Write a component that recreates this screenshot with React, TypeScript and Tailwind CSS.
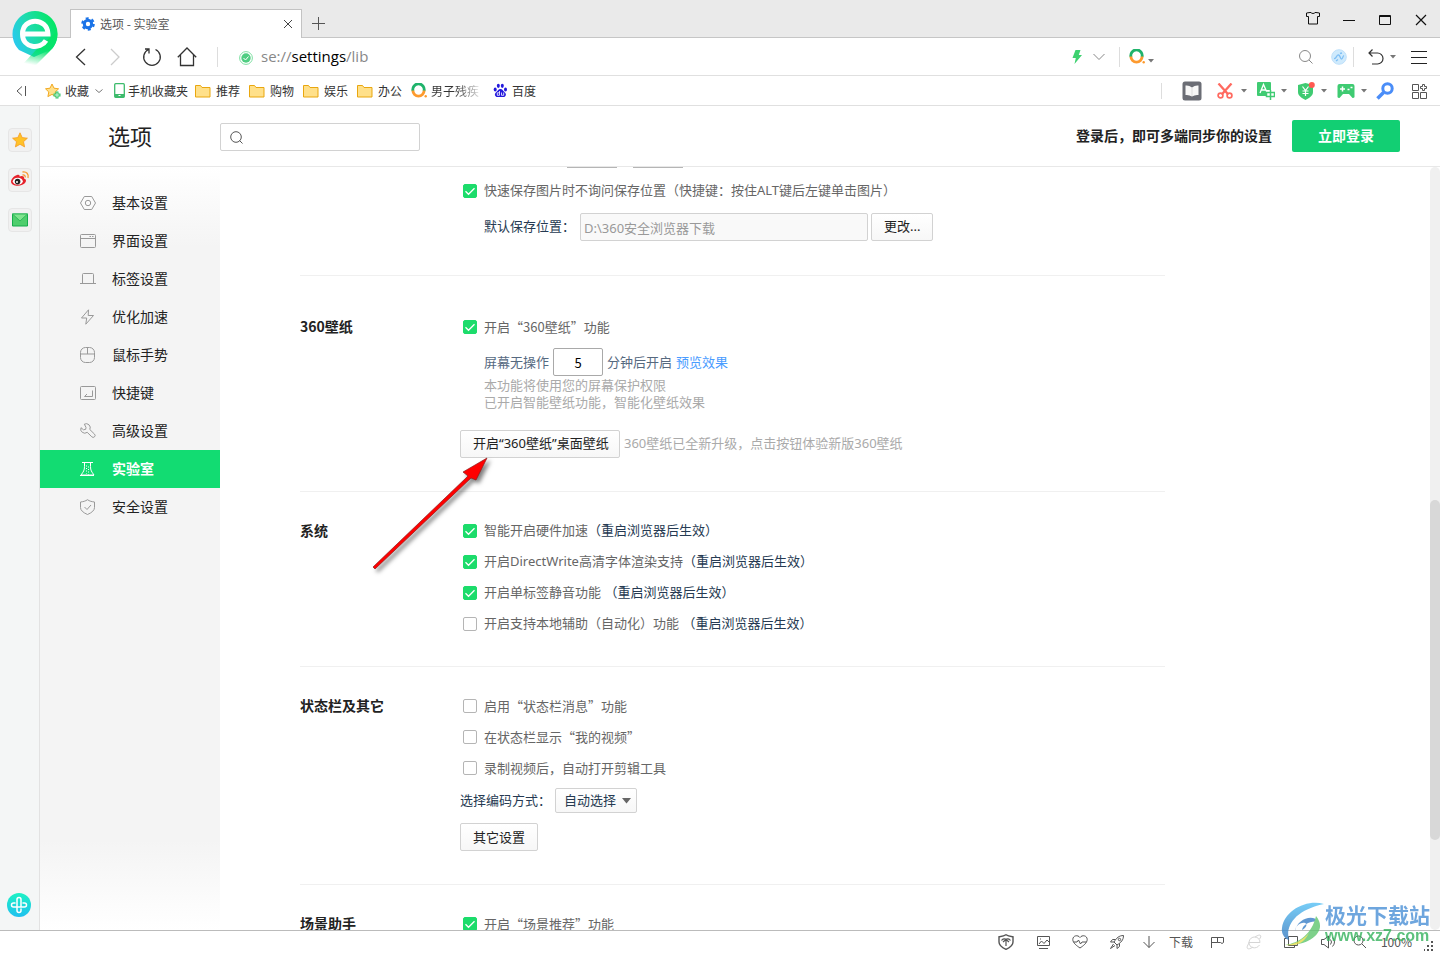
import React, { useState } from "react";

interface IconProps {
  children: React.ReactNode;
  size?: number;
  className?: string;
}

const Icon: React.FC<IconProps> = ({ children, size = 16, className = "" }) => (
  <svg
    width={size}
    height={size}
    viewBox={`0 0 ${size} ${size}`}
    fill="none"
    stroke="currentColor"
    className={`shrink-0 ${className}`}
    aria-hidden="true"
  >
    {children}
  </svg>
);

const Caret: React.FC = () => (
  <svg width="6" height="4" viewBox="0 0 6 4" className="shrink-0 text-[#777]" aria-hidden="true">
    <path d="M0 0h6L3 3.5z" fill="currentColor" />
  </svg>
);

const RingLogo: React.FC = () => (
  <Icon size={16}>
    <path d="M2 8a5.7 5.7 0 1 1 11 0" stroke="#1fb36b" strokeWidth="2.8" />
    <path d="M1.9 7.5a5.6 5.6 0 0 0 11.2 0" stroke="#fd9a2e" strokeWidth="2.8" />
    <circle cx="14.7" cy="13.3" r="1.2" fill="#fd9a2e" stroke="none" />
  </Icon>
);

const Folder: React.FC = () => (
  <Icon size={16}>
    <path d="M.5 2.5h5l1.5 2h8v9.500H.5z" fill="#ffe08a" stroke="#e9a70f" />
  </Icon>
);

interface NavItem {
  id: string;
  label: string;
  icon: React.ReactNode;
}

const navItems: NavItem[] = [
  {
    id: "basic",
    label: "基本设置",
    icon: (
      <>
        <path d="M4.3 1.5h7.4L15.5 8l-3.8 6.5H4.3L.5 8z" />
        <circle cx="8" cy="8" r="2.7" />
      </>
    ),
  },
  {
    id: "ui",
    label: "界面设置",
    icon: (
      <>
        <rect x=".5" y="1.5" width="15" height="13" rx="1" />
        <path d="M.5 5.5h15M9.5 3.5h1.5M12 3.5h1.5" />
      </>
    ),
  },
  { id: "tabs", label: "标签设置", icon: <path d="M2.5 12.5v-9q0-1 1-1h9q1 0 1 1v9M0 12.5h16" /> },
  { id: "speed", label: "优化加速", icon: <path d="M8.5.8 1.5 9h5.2l-.9 6.2L13.500 6.500H8.200z" /> },
  {
    id: "mouse",
    label: "鼠标手势",
    icon: (
      <>
        <rect x=".5" y=".5" width="14" height="15" rx="5" />
        <path d="M.5 7h14M7.5.5V7" />
      </>
    ),
  },
  {
    id: "keys",
    label: "快捷键",
    icon: (
      <>
        <rect x=".5" y="1.5" width="15" height="13" rx="1" />
        <path d="M12.5 5.5v6h-8M7 9l-2.5 2.5" />
      </>
    ),
  },
  {
    id: "advanced",
    label: "高级设置",
    icon: (
      <path d="M4.3 1.200a4 4 0 0 1 5.500 5.300l4.700 4.600a1.800 1.800 0 0 1-2.700 2.700L7.200 9.300A4 4 0 0 1 1 4.700l2.500 2.100 2.200-.5.300-2z" />
    ),
  },
  {
    id: "lab",
    label: "实验室",
    icon: (
      <>
        <path d="M2 1.500h11M4.500 2v3.500c0 4-1 5-3.500 8.500h13c-2.500-3.500-3.500-4.500-3.500-8.500V2" />
        <path d="M6.500 4.500v8M8.500 5.500v8" strokeDasharray="1 1.500" />
        <path d="M0 14.500h14" />
      </>
    ),
  },
  {
    id: "safe",
    label: "安全设置",
    icon: (
      <>
        <path d="M7.500.7c2 1.500 4.500 2 7 2.300v5.500q0 4-7 7-7-3-7-7V3c2.500-.3 5-.8 7-2.300z" />
        <path d="M4.500 8 7 10.500 11 6" />
      </>
    ),
  },
];

interface CheckProps {
  id: string;
  label: string;
  note?: string;
  checked?: boolean;
}

const Check: React.FC<CheckProps> = ({ id, label, note, checked }) => (
  <div className="flex h-[31px] items-center gap-[7px] pl-[3px]">
    <span className="grid size-3.5 shrink-0">
      <input
        id={id}
        type="checkbox"
        defaultChecked={checked}
        className="peer col-start-1 row-start-1 size-3.5 appearance-none rounded-xs border border-[#b5b5b5] bg-white checked:border-[#1cdc6b] checked:bg-[#1cdc6b]"
      />
      <svg viewBox="0 0 14 14" className="pointer-events-none invisible col-start-1 row-start-1 size-3.5 peer-checked:visible">
        <path d="M2.5 7.3 5.5 10.3 11.5 4.2" fill="none" stroke="#fff" strokeWidth="1.3" />
      </svg>
    </span>
    <label htmlFor={id} className="text-[#666]">
      {label}
      {note && <span className="text-[#263a52]">{note}</span>}
    </label>
  </div>
);

interface SectionProps {
  title?: string;
  className: string;
  children: React.ReactNode;
}

const Section: React.FC<SectionProps> = ({ title, className, children }) => (
  <section className={`flex border-b border-[#f0f0f0] ${className}`}>
    <h2 className="w-40 shrink-0 text-sm leading-[31px] font-bold text-[#222]">{title}</h2>
    <div className="min-w-0 flex-1">{children}</div>
  </section>
);

const plainButton =
  "rounded-xs border border-[#d2d2d2] bg-linear-to-b from-white to-[#f7f7f7] px-3 text-[#222] whitespace-nowrap";

const TitleBar: React.FC = () => (
  <header className="flex h-[38px] shrink-0 items-end border-b border-[#c6c6c6] bg-[#eaeaea] pl-[70px]">
    <div className="-mb-px flex h-[29px] w-[232px] items-center border border-b-0 border-[#c3c3c3] bg-white px-2.5">
      <Icon size={14} className="text-[#1a73e8]">
        <circle cx="7" cy="7" r="3.7" strokeWidth="3" />
        <circle cx="7" cy="7" r="5.8" strokeWidth="2" strokeDasharray="3 3.07" />
      </Icon>
      <span className="ml-[5px] flex-1 text-xs text-[#555]">选项 - 实验室</span>
      <button type="button" aria-label="关闭标签" className="-mr-0.5">
        <Icon size={10} className="text-[#444]">
          <path d="m1 1 8 8M9 1 1 9" />
        </Icon>
      </button>
    </div>
    <button type="button" aria-label="新建标签" className="mb-1.5 ml-2.5">
      <Icon size={14} className="text-[#555]">
        <path d="M6.5 0v13M0 6.5h13" />
      </Icon>
    </button>
    <div className="mb-2.5 ml-auto flex items-center gap-5 pr-[11px] text-[#111]">
      <button type="button" aria-label="皮肤">
        <Icon>
          <path d="M5 1.5h1c.5 1.3 3.5 1.3 4 0h1l3.500.5v3.500h-2v7.500h-9V5.500h-2V2z" />
        </Icon>
      </button>
      <button type="button" aria-label="最小化">
        <Icon>
          <path d="M2 9.5h12" />
        </Icon>
      </button>
      <button type="button" aria-label="最大化">
        <Icon>
          <path d="M2.5 4.500h11v9h-11zM2 5.500h12" />
        </Icon>
      </button>
      <button type="button" aria-label="关闭">
        <Icon>
          <path d="m3 4 10 10M13 4 3 14" strokeWidth="1.200" />
        </Icon>
      </button>
    </div>
  </header>
);

const AddressBar: React.FC = () => (
  <div className="flex h-[38px] shrink-0 items-center border-b border-[#e0e0e0] pl-[72px] pr-[13px] text-[#333]">
    <div className="flex items-center gap-[15px]">
      <button type="button" aria-label="后退">
        <Icon size={20}>
          <path d="M13 2 4.5 10l8.5 8" strokeWidth="1.3" />
        </Icon>
      </button>
      <button type="button" aria-label="前进" className="text-[#ccc]">
        <Icon size={20}>
          <path d="m4 2 8 8-8 8" strokeWidth="1.3" />
        </Icon>
      </button>
      <button type="button" aria-label="刷新">
        <Icon size={20}>
          <path d="M13.5 2.5a8.3 8.3 0 1 1-7 0M3 2h4v4.5" strokeWidth="1.3" />
        </Icon>
      </button>
      <button type="button" aria-label="主页">
        <Icon size={20}>
          <path d="M.8 10.2 10 1l9.200 9.200M3.500 8v10.500h13V8" strokeWidth="1.300" />
        </Icon>
      </button>
    </div>
    <span className="ml-5 h-5 w-px bg-[#ddd]" />
    <Icon size={14} className="mt-0.5 ml-[21px]">
      <circle cx="7" cy="7" r="6.4" stroke="#7fe0a3" />
      <circle cx="7" cy="7" r="4.7" fill="#4fce82" stroke="none" />
      <path d="m4.5 7 2 2 3-3.5" stroke="#fff" />
    </Icon>
    <p className="ml-2 flex-1 font-['Open_Sans','Noto_Sans',sans-serif] text-[15px] text-[#888]">
      se://<span className="text-black">settings</span>/lib
    </p>
    <Icon className="text-[#3dd16f]">
      <path d="M6.5 1h5L9.800 6H13L5.500 15l1.300-6H3.500z" fill="currentColor" stroke="none" />
    </Icon>
    <Icon size={14} className="ml-[7px] text-[#888]">
      <path d="m1.500 4 5.500 5.500L12.500 4" />
    </Icon>
    <span className="ml-[13px] h-5 w-px bg-[#ddd]" />
    <div className="ml-[9px] flex w-44 items-center gap-[3px]">
      <RingLogo />
      <span className="pt-2">
        <Caret />
      </span>
      <input aria-label="搜索网页" className="min-w-0 flex-1 outline-none" />
    </div>
    <Icon size={14} className="-ml-[6px] text-[#888]">
      <circle cx="6" cy="6" r="5.5" />
      <path d="m10 10 3.5 3.5" />
    </Icon>
    <Icon className="ml-[18px]">
      <circle cx="8" cy="8" r="7.3" fill="#cfeafc" stroke="#bfe0fa" />
      <path d="M3 9.500c2.500.5 2.500-4 4.500-3.500s1.500 4 3 4 1-3 2.500-3.500M5 12l2-1.500M9 4.500l2-.5" stroke="#7fbff5" strokeWidth="1.300" />
    </Icon>
    <span className="ml-[6px] h-5 w-px bg-[#ddd]" />
    <button type="button" aria-label="恢复" className="ml-[14px]">
      <Icon>
        <path d="M4.5.5 1 4l3.500 3.500M1 4h8.500a5.500 5.500 0 0 1 0 11H4" strokeWidth="1.200" />
      </Icon>
    </button>
    <span className="ml-[6px]">
      <Caret />
    </span>
    <button type="button" aria-label="菜单" className="ml-[15px] text-[#222]">
      <Icon>
        <path d="M0 2.5h16M0 8.5h16M0 14.5h16" />
      </Icon>
    </button>
  </div>
);

const BookmarkBar: React.FC = () => (
  <div className="flex h-[30px] shrink-0 items-center border-b border-[#e0e0e0] pl-4 pr-3 text-xs text-[#333]">
    <Icon size={10} className="text-[#555]">
      <path d="M6 .5 1 5l5 4.5M9.5 0v10" />
    </Icon>
    <a href="#fav" className="ml-[19px] flex items-center gap-1">
      <Icon>
        <path d="m7 1 2 4.200 4.600.6-3.400 3.200.9 4.600L7 11.400 2.900 13.600l.9-4.600L.5 5.800l4.500-.6z" fill="#ffe08a" stroke="#f2a922" />
        <path d="M12 8.500v7M8.500 12h7" stroke="#35c46a" strokeWidth="3" />
        <path d="M12 9.500v5M9.500 12h5" stroke="#c8f5d8" />
      </Icon>
      收藏
    </a>
    <Icon size={8} className="ml-1.5 text-[#777]">
      <path d="m.5 2.500 3.500 3 3.500-3" />
    </Icon>
    <a href="#mobile" className="ml-[11px] flex items-center gap-[3px]">
      <svg width="11" height="15" viewBox="0 0 11 15" className="shrink-0" aria-hidden="true">
        <rect x=".7" y=".7" width="9.6" height="13.6" rx="1" fill="#fff" stroke="#3dbb6c" strokeWidth="1.3" />
        <path d="M.7 11h9.600v3.300H.7z" fill="#3dbb6c" />
        <path d="M4.5 12.5h2" stroke="#fff" />
      </svg>
      手机收藏夹
    </a>
    <nav className="ml-[7px] flex gap-[9px]">
      {["推荐", "购物", "娱乐", "办公"].map((name) => (
        <a key={name} href="#folder" className="flex items-center gap-[5px]">
          <Folder />
          {name}
        </a>
      ))}
    </nav>
    <a href="#news" className="ml-[9px] flex items-center gap-1">
      <RingLogo />
      <span className="bg-linear-to-r from-[#333] from-50% to-[#ddd] bg-clip-text text-transparent">男子残疾</span>
    </a>
    <a href="#baidu" className="ml-[14px] flex items-center gap-1">
      <Icon size={15} className="text-[#2319dc]">
        <g fill="currentColor" stroke="none">
          <ellipse cx="2.200" cy="6.500" rx="1.500" ry="2" />
          <ellipse cx="5.300" cy="2.800" rx="1.500" ry="2.100" />
          <ellipse cx="9.300" cy="2.800" rx="1.500" ry="2.100" />
          <ellipse cx="12.500" cy="6.500" rx="1.500" ry="2" />
          <path d="M7.400 6c2 0 2.500 1.700 4 3s2 2.500 1 4-3 1-5 1-4 .5-5-1-.5-2.700 1-4S5.400 6 7.400 6z" />
        </g>
        <path d="M6.500 8v4.300H4.300v-2.500h2.200M8.500 9.500v2.800h2.200V9.500" stroke="#fff" strokeWidth=".8" />
      </Icon>
      百度
    </a>
    <div className="ml-auto flex items-center">
      <span className="mr-5 h-4 w-px bg-[#ddd]" />
      <Icon size={20}>
        <rect x=".5" y=".5" width="19" height="19" rx="2.5" fill="#6b6d75" stroke="none" />
        <path d="M3.500 4.500q3.500-.5 6.500 2 3-2.500 6.500-2V14q-3.500-.5-6.500 1.500-3-2-6.500-1.500z" fill="#f7f7f7" stroke="none" />
        <path d="M10 7v8" stroke="#ddd" />
      </Icon>
      <Icon className="mr-2 ml-[15px] text-[#ff6a60]">
        <path d="m1.500.5 9.800 11M14.500.5l-9.800 11" strokeWidth="2.300" />
        <circle cx="3.500" cy="12.500" r="2.400" strokeWidth="1.700" />
        <circle cx="12.500" cy="12.500" r="2.400" strokeWidth="1.700" />
      </Icon>
      <Caret />
      <Icon size={18} className="mr-1.5 ml-[10px] text-[#3fcb72]">
        <path d="M1 0h12q1 0 1 1v7H9v6H1q-1 0-1-1V1q0-1 1-1z" fill="currentColor" stroke="none" />
        <path d="m3 11 3.500-8.500L9.800 10M4.500 8h4" stroke="#fff" strokeWidth="1.300" />
        <path d="M13.500 8v10M9.500 10.500h8v4h-8z" strokeWidth="1.500" />
      </Icon>
      <Caret />
      <Icon size={18} className="mr-1.5 ml-[10px] text-[#3fcb72]">
        <path d="M8.500 1 16 3v7c0 4-4 6-7.500 8C5 16 1 14 1 10V3z" fill="currentColor" stroke="none" />
        <path d="m5.500 4.500 3 4 3-4M8.500 8.500V14M5.500 9h6M5.500 11.500h6" stroke="#fff" strokeWidth="1.200" />
        <circle cx="14.800" cy="3" r="3" fill="#ff5a52" stroke="none" />
      </Icon>
      <Caret />
      <Icon size={18} className="mr-1.5 ml-[10px] text-[#3fcb72]">
        <path d="M2.500 2h13q2 0 2 2v11q0 1-2 1l-3.500-4H6l-3.500 4q-2 0-2-1V4q0-2 2-2z" fill="currentColor" stroke="none" />
        <path d="M5.500 4.500v5M3 7h5M10.500 7.500h2M13.500 5.500h2" stroke="#fff" strokeWidth="1.500" />
      </Icon>
      <Caret />
      <Icon size={18} className="ml-[9px] text-[#4a8df8]">
        <circle cx="11.500" cy="6.500" r="4.700" strokeWidth="3" />
        <path d="m7.500 10.500-6 6" strokeWidth="3.500" />
      </Icon>
      <Icon className="ml-[18px] text-[#555]">
        <path d="M.5 1.500h6v6h-6zM.5 9.500h6v6h-6zM8.500 9.500h6v6h-6zM10.500 3.500v-2h2v2h2v2h-2v2h-2v-2h-2v-2z" />
      </Icon>
    </div>
  </div>
);

const SideRail: React.FC = () => (
  <aside className="flex w-10 shrink-0 flex-col items-center gap-4 border-r border-[#e2e2e2] bg-[#f4f6f6] pt-[22px] pb-[13px]">
    <button type="button" aria-label="收藏" className="grid size-6 place-items-center rounded-sm border border-[#e6e6e6] bg-[#f1f1f1]">
      <Icon>
        <path d="m8 .8 2.200 4.800 5.200.6-3.900 3.500 1.100 5.200L8 12.300l-4.600 2.600 1.100-5.200L.6 6.200l5.200-.6z" fill="#ffc228" stroke="#f59a23" strokeWidth=".8" />
      </Icon>
    </button>
    <button type="button" aria-label="微博" className="grid size-6 place-items-center rounded-sm border border-[#e6e6e6] bg-[#f1f1f1]">
      <Icon size={20}>
        <path d="M7 5c2-.9 3 .2 2.500 1.600C12 5.500 14.500 6 14 8.500c2 .6 2.500 2 1.500 3.700-2.500 4.600-14 4.800-14.500-.5C1 9 4 6 7 5z" fill="#e6222b" stroke="none" />
        <ellipse cx="7.800" cy="11.300" rx="5" ry="3.500" fill="#fff" stroke="none" />
        <circle cx="7.600" cy="11.600" r="2.800" fill="#222" stroke="none" />
        <circle cx="7" cy="12" r="1" fill="#fff" stroke="none" />
        <path d="M12.500 5c2-.4 3 .8 2.700 2.500M12.500 2c4-.8 6.500 2 5.500 6" stroke="#f79a33" strokeWidth="1.300" />
      </Icon>
    </button>
    <button type="button" aria-label="邮箱" className="grid size-6 place-items-center rounded-sm border border-[#e6e6e6] bg-[#f1f1f1]">
      <Icon>
        <path d="M.5 2h15v12H.5z" fill="#4fce6d" stroke="#16ad4d" />
        <path d="M.5 2h15L8 9z" fill="#7fe48e" stroke="#2fb858" />
      </Icon>
    </button>
    <button type="button" aria-label="添加" className="mt-auto -ml-px">
      <Icon size={24}>
        <defs>
          <linearGradient id="add" x2="0" y2="1">
            <stop stopColor="#1df2c4" />
            <stop offset="1" stopColor="#1fc0f0" />
          </linearGradient>
        </defs>
        <circle cx="12" cy="12" r="12" fill="url(#add)" stroke="none" />
        <path
          d="M10 14V6.500a2 2 0 0 1 4 0V14M10 14v3.500a2 2 0 0 0 4 0V16M14 14H6.500a2 2 0 0 1 0-4H8M14 14h3.500a2 2 0 0 0 0-4H16"
          stroke="#fff"
          strokeWidth="1.500"
          strokeLinecap="round"
        />
      </Icon>
    </button>
  </aside>
);

const SettingsHeader: React.FC = () => (
  <div className="flex h-[61px] shrink-0 items-center border-b border-[#e8e8e8] pr-10">
    <h1 className="w-[180px] pb-0.5 pl-[68px] text-[22px] text-[#222]">选项</h1>
    <div className="mt-0.5 flex h-7 w-[200px] items-center gap-2 rounded-xs border border-[#d2d2d2] px-[9px]">
      <Icon size={13} className="text-[#555]">
        <circle cx="6" cy="6" r="5.3" />
        <path d="m9.5 9.5 3 3" />
      </Icon>
      <input type="search" aria-label="搜索设置" className="min-w-0 flex-1 text-[13px] outline-none" />
    </div>
    <p className="mr-5 ml-auto pb-0.5 text-sm font-bold text-[#222]">登录后，即可多端同步你的设置</p>
    <button type="button" className="h-8 w-[108px] rounded-xs bg-[#12cf73] pb-0.5 text-sm font-bold text-white">
      立即登录
    </button>
  </div>
);

const SettingsNav: React.FC = () => {
  const [active, setActive] = useState<string>("lab");

  return (
    <nav className="w-[180px] shrink-0 bg-[linear-gradient(to_bottom,#fff,#f4f4f4_80px,#f4f4f4_calc(100%-90px),#fff)] pt-[17px]">
      {navItems.map((item) => (
        <button
          key={item.id}
          type="button"
          onClick={() => setActive(item.id)}
          className={`flex h-[38px] w-full items-center gap-4 pl-10 text-sm ${
            active === item.id ? "bg-[#12dc72] font-bold text-white" : "text-[#222]"
          }`}
        >
          <Icon className={active === item.id ? "text-white" : "text-[#999]"}>{item.icon}</Icon>
          <span className="pb-0.5">{item.label}</span>
        </button>
      ))}
    </nav>
  );
};

const SettingsContent: React.FC = () => (
  <main className="min-w-0 flex-1 overflow-hidden pl-20 text-[13px]">
    <div className="max-w-[865px]">
      <Section className="pb-[34px] font-['Noto_Sans','Noto_Sans_CJK_SC',sans-serif]">
        {/* lower edge of the row scrolled under the header */}
        <div className="mb-[7px] flex gap-4 pl-[107px]">
          <span className="h-px w-[50px] bg-[#b5b5b5]" />
          <span className="h-px w-[50px] bg-[#b5b5b5]" />
        </div>
        <Check id="quick-save" label="快速保存图片时不询问保存位置（快捷键：按住ALT键后左键单击图片）" checked />
        <div className="mt-[7px] flex items-center pl-6">
          <label htmlFor="save-path" className="w-24 text-[#263a52]">
            默认保存位置：
          </label>
          <input
            id="save-path"
            disabled
            defaultValue="D:\360安全浏览器下载"
            className="h-7 w-72 rounded-xs border border-[#d2d2d2] bg-[#f9f9f9] px-[3px] text-[#999]"
          />
          <button type="button" className={`ml-[3px] h-7 ${plainButton}`}>
            更改...
          </button>
        </div>
      </Section>

      <Section title="360壁纸" className="pt-[35px] pb-[33px]">
        <Check id="wallpaper" label="开启“360壁纸”功能" checked />
        <div className="mt-1.5 flex items-center gap-1 pl-6 text-[#56697f]">
          <label htmlFor="idle">屏幕无操作</label>
          <input
            id="idle"
            defaultValue="5"
            className="h-7 w-[50px] rounded-xs border border-[#a9a9a9] text-center text-black"
          />
          <span>分钟后开启</span>
          <a href="#preview" className="text-[#4a9cff]">
            预览效果
          </a>
        </div>
        <p className="pl-6 leading-[17px] text-[#aaa]">
          本功能将使用您的屏幕保护权限
          <br />
          已开启智能壁纸功能，智能化壁纸效果
        </p>
        <div className="mt-5 flex items-center gap-1 font-['Noto_Sans','Noto_Sans_CJK_SC',sans-serif]">
          <button type="button" className={`h-7 w-40 ${plainButton}`}>
            开启“360壁纸”桌面壁纸
          </button>
          <span className="text-[#aaa]">360壁纸已全新升级，点击按钮体验新版360壁纸</span>
        </div>
      </Section>

      <Section title="系统" className="pt-[23px] pb-[27px] font-['Noto_Sans','Noto_Sans_CJK_SC',sans-serif]">
        <Check id="hardware" label="智能开启硬件加速" note="（重启浏览器后生效）" checked />
        <Check id="directwrite" label="开启DirectWrite高清字体渲染支持" note="（重启浏览器后生效）" checked />
        <Check id="mute" label="开启单标签静音功能 " note="（重启浏览器后生效）" checked />
        <Check id="assist" label="开启支持本地辅助（自动化）功能 " note="（重启浏览器后生效）" />
      </Section>

      <Section title="状态栏及其它" className="pt-[23px] pb-[33px]">
        <Check id="status-msg" label="启用“状态栏消息”功能" />
        <Check id="my-video" label="在状态栏显示“我的视频”" />
        <Check id="record" label="录制视频后，自动打开剪辑工具" />
        <div className="mt-[5px] flex items-center text-[#263a52]">
          <label htmlFor="codec" className="w-[95px] pb-0.5">
            选择编码方式：
          </label>
          <span className="grid">
            <select
              id="codec"
              className="col-start-1 row-start-1 h-[25px] w-[82px] appearance-none rounded-xs border border-[#d2d2d2] bg-linear-to-b from-white to-[#f7f7f7] pb-0.5 pl-2"
            >
              <option>自动选择</option>
            </select>
            <svg width="9" height="6" viewBox="0 0 9 6" className="pointer-events-none col-start-1 row-start-1 mr-1.5 self-center justify-self-end">
              <path d="M0 0h9L4.5 5.5z" fill="#666" />
            </svg>
          </span>
        </div>
        <button type="button" className={`mt-2.5 block h-7 ${plainButton}`}>
          其它设置
        </button>
      </Section>

      <Section title="场景助手" className="pt-[23px]">
        <Check id="scene" label="开启“场景推荐”功能" checked />
      </Section>
    </div>
  </main>
);

const StatusBar: React.FC = () => (
  <footer className="flex h-6 shrink-0 items-center justify-end gap-4 border-t border-[#bbb] pr-1.5 pb-0.5 text-xs text-[#555]">
    <div className="flex gap-[21px]">
      <Icon>
        <path d="M8 .8c2 1.5 4.5 1.7 7 2V8c0 4-4 6-7 7.3C5 14 1 12 1 8V2.8c2.5-.3 5-.5 7-2z" strokeWidth="1.4" />
        <path d="M3.5 6.5C5 4.500 7 4.500 8 5.500c1-1 3-1 4.500 1M5 8l3-2.500L11 8M8 5.500V12" strokeWidth="1.200" />
      </Icon>
      <Icon>
        <path d="M2.5 2.5h12v9h-12zM4 10l2.5-3 2.500 2.500L12 6l2 2M5 5h1M4 14.500h9" />
      </Icon>
      <Icon>
        <path d="M8 14C5 12 .8 9 .8 5.5c0-4 5-5 7.200-2 2.200-3 7.200-2 7.200 2C15.200 9 11 12 8 14z" />
        <path d="M2 8h3l1.500-2 2 4L10 8h4" />
      </Icon>
      <Icon>
        <path d="M14.5 1.5C10 1.5 7.500 4 5 8l3 3c4-2.500 6.500-5 6.500-9.500zM6.500 5.500h-3L1.500 8 5 8M10.500 9.500v3L8 14.500V11M4.500 10 1.500 14.500 6 11.500" />
        <circle cx="10.5" cy="5.5" r="1.2" />
      </Icon>
    </div>
    <a href="#downloads" className="flex items-center gap-3">
      <Icon>
        <path d="M8 2v11.5M2.5 8 8 13.5 13.5 8" />
      </Icon>
      下载
    </a>
    <div className="flex gap-[21px]">
      <Icon>
        <path d="M2.500 14V3.500h12v5l-1.500 1-1.500-1h-3v-5M2.500 8.500h6" />
      </Icon>
      <Icon className="text-[#d5d5d5]">
        <path d="M2.500 8.500H14c0-7-10-7.500-11-.5-.7 6 7.500 8 10.500 3M9 3c6-4 7-1 4.500 2M3 9c-4 6-1 7.500 4 4" />
      </Icon>
      <Icon>
        <path d="M5.500 2.500h9v9h-9zM3.500 4.500h-2v9h10v-2" />
      </Icon>
      <Icon>
        <path d="M1.500 5.500H4L8.500 2v12L4 10.500H1.500zM10.500 5.500q2 2.500 0 5M12.500 3.500q4 4.500 0 9" />
      </Icon>
    </div>
    <div className="flex items-center gap-[13px]">
      <Icon>
        <circle cx="6.500" cy="6.500" r="4.500" />
        <path d="m10 10 4 4" />
      </Icon>
      100%
    </div>
    <Icon size={10} className="mt-2 -ml-1">
      <path d="M7 1h2M7 5h2M3 5h2M7 9h2M3 9h2M0 9h1" strokeWidth="2" />
    </Icon>
  </footer>
);

const BrowserLogo: React.FC = () => (
  <svg width="46" height="56" viewBox="0 0 46 56" className="absolute top-[11px] left-3" aria-label="360安全浏览器">
    <defs>
      <linearGradient id="pin" x1="0" y1=".9" x2="1" y2=".5">
        <stop stopColor="#2bc5ff" />
        <stop offset=".5" stopColor="#1fdbb0" />
        <stop offset="1" stopColor="#05e668" />
      </linearGradient>
      <linearGradient id="tail" x1=".5" y1="0" x2=".3" y2="1">
        <stop stopColor="#05e668" />
        <stop offset=".5" stopColor="#08e36e" />
        <stop offset="1" stopColor="#08e36e" stopOpacity="0" />
      </linearGradient>
    </defs>
    <path d="M23 0a23 23 0 0 1 17 38L22 46 7 39A23 23 0 0 1 23 0z" fill="url(#pin)" />
    <path d="M45 20c1 9-2 15-7 20L24 54H10L24 39z" fill="url(#tail)" />
    <path d="M12 23H36C35.500 6 10.500 6 10.500 23c0 14.500 18 16 23.500 6.500" fill="none" stroke="#fff" strokeWidth="5" />
  </svg>
);

// Annotation pointing at the wallpaper button
const Arrow: React.FC = () => (
  <svg width="124" height="122" viewBox="0 0 124 122" className="pointer-events-none absolute top-[454px] left-[370px] drop-shadow-[3px_3px_2px_rgba(0,0,0,0.5)]" aria-hidden="true">
    <path d="m3 113 95-91-5-4 24-14-11 22-5-2L5 115z" fill="#f00" stroke="#8b1a1a" strokeWidth=".7" />
  </svg>
);

const Watermark: React.FC = () => (
  <div className="pointer-events-none absolute right-2.5 bottom-2 flex items-center font-bold whitespace-nowrap opacity-80">
    <svg width="44" height="44" viewBox="0 0 44 44" aria-hidden="true">
      <defs>
        <linearGradient id="swoosh" x2="0" y2="1">
          <stop stopColor="#55c1f5" />
          <stop offset="1" stopColor="#3579c0" />
        </linearGradient>
      </defs>
      <path d="M43 2C25-3 3 9 1 26c-1 6 3 11 7 12-4-14 6-30 35-36z" fill="url(#swoosh)" />
      <path d="M14 29c2-12 18-18 24-9-8-2-16 2-17 8 4-2 6-6 3-7-5-1-10 4-10 8z" fill="#397fc7" />
      <path d="M35 14c12 14-4 30-31 29 14-2 27-11 31-29z" fill="#5fc66f" />
      <path d="M4 43c9 0 18-5 24-12-6 12-14 13-24 12z" fill="#e5dc48" />
    </svg>
    <div className="flex flex-col">
      <span className="text-[21px] leading-6 text-[#4a90d6]">极光下载站</span>
      <span className="font-['Liberation_Sans',sans-serif] text-base leading-5 text-[#35b25c]">www.xz7.com</span>
    </div>
  </div>
);

const App: React.FC = () => (
  <div className="relative flex h-screen flex-col overflow-hidden bg-white font-['Noto_Sans_CJK_SC',sans-serif]">
    <TitleBar />
    <AddressBar />
    <BookmarkBar />
    <div className="flex min-h-0 flex-1">
      <SideRail />
      <div className="flex min-w-0 flex-1 flex-col">
        <SettingsHeader />
        <div className="flex min-h-0 flex-1">
          <SettingsNav />
          <SettingsContent />
          <div className="flex w-2.5 shrink-0 flex-col rounded-full bg-[#f0f0f0]">
            <span className="mt-[333px] h-[340px] rounded-full bg-[#d8d8d8]" />
          </div>
        </div>
      </div>
    </div>
    <StatusBar />
    <BrowserLogo />
    <Arrow />
    <Watermark />
  </div>
);

export default App;
